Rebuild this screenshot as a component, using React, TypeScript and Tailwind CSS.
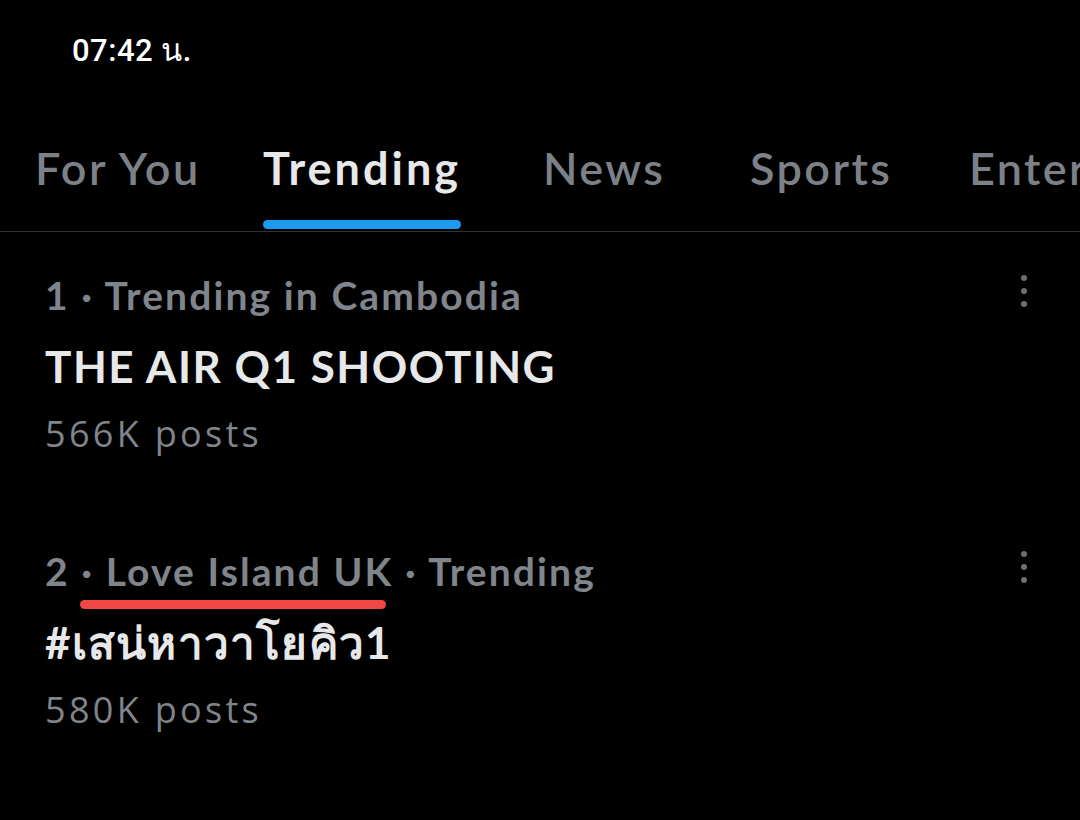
const tabs = [
  { label: "For You", active: false, w: "w-[263px]", pl: "pl-[35px]" },
  { label: "Trending", active: true, w: "w-[280px]", pl: "pl-0" },
  { label: "News", active: false, w: "w-[207px]", pl: "pl-0" },
  { label: "Sports", active: false, w: "w-[219px]", pl: "pl-0" },
  { label: "Entertainment", active: false, w: "w-[300px]", pl: "pl-0" },
];

type Trend = {
  rank: number;
  context: string;
  suffix?: string;
  title: string;
  posts: string;
  marked?: boolean;
  thai?: boolean;
};

const trends: Trend[] = [
  { rank: 1, context: "Trending in Cambodia", title: "THE AIR Q1 SHOOTING", posts: "566K posts" },
  {
    rank: 2,
    context: "Love Island UK",
    suffix: "Trending",
    title: "#เสน่หาวาโยคิว1",
    posts: "580K posts",
    marked: true,
    thai: true,
  },
];

function MoreDots() {
  return (
    <div className="flex flex-col items-center gap-[7px] pt-[5px]">
      <span className="h-[6px] w-[6px] rounded-full bg-[#6b6e72]" />
      <span className="h-[6px] w-[6px] rounded-full bg-[#6b6e72]" />
      <span className="h-[6px] w-[6px] rounded-full bg-[#6b6e72]" />
    </div>
  );
}

function TrendRow({ trend }: { trend: Trend }) {
  return (
    <div className="flex justify-between pl-[45px] pr-[53px]">
      <div className="flex flex-col">
        <div className="h-[50px] whitespace-nowrap font-['Lato','Noto_Sans',sans-serif] text-[39px] font-bold leading-[50px] tracking-[2.1px] text-[#7f858b]">
          {trend.rank} · <span className="relative">
            {trend.context}
            {trend.marked && (
              <span className="absolute -left-[26px] right-[7px] top-[52px] h-[9px] rounded-full bg-[#f04646]" />
            )}
          </span>
          {trend.suffix && <> · {trend.suffix}</>}
        </div>
        <div
          className={`mt-[21px] h-[50px] whitespace-nowrap font-['Lato','Noto_Sans',sans-serif] font-bold leading-[50px] text-[#e6e8e9] ${
            trend.thai ? "text-[44px] tracking-[1.2px]" : "text-[44px] tracking-[1.5px]"
          }`}
        >
          {trend.title}
        </div>
        <div className="mt-[21px] h-[44px] whitespace-nowrap font-['Open_Sans','Noto_Sans',sans-serif] text-[36px] font-normal leading-[44px] tracking-[3.3px] text-[#7f858b]">
          {trend.posts}
        </div>
      </div>
      <MoreDots />
    </div>
  );
}

export default function App() {
  return (
    <div className="h-[820px] w-[1080px] overflow-hidden bg-black">
      <div className="flex h-[104px] items-start pl-[72px] pt-[31px]">
        <span className="font-['Roboto','Noto_Sans',sans-serif] text-[31px] font-medium leading-[40px] tracking-[0.5px] text-white">
          07:42 น.
        </span>
      </div>

      <div className="flex h-[128px] overflow-hidden border-b border-[#2f3336]">
        {tabs.map((tab) => (
          <div key={tab.label} className={`flex shrink-0 flex-col pt-[39px] ${tab.w} ${tab.pl}`}>
            <span
              className={`h-[50px] whitespace-nowrap font-['Lato','Noto_Sans',sans-serif] text-[45px] leading-[50px] ${
                tab.active
                  ? "font-bold tracking-[3px] text-[#e6e8e9]"
                  : "font-semibold tracking-[2.4px] text-[#7c8188]"
              }`}
            >
              {tab.label}
            </span>
            {tab.active && <div className="mt-[27px] h-[9px] w-[198px] rounded-full bg-[#1d9bf0]" />}
          </div>
        ))}
      </div>

      <div className="flex flex-col gap-[90px] pt-[38px]">
        {trends.map((t) => (
          <TrendRow key={t.rank} trend={t} />
        ))}
      </div>
    </div>
  );
}
